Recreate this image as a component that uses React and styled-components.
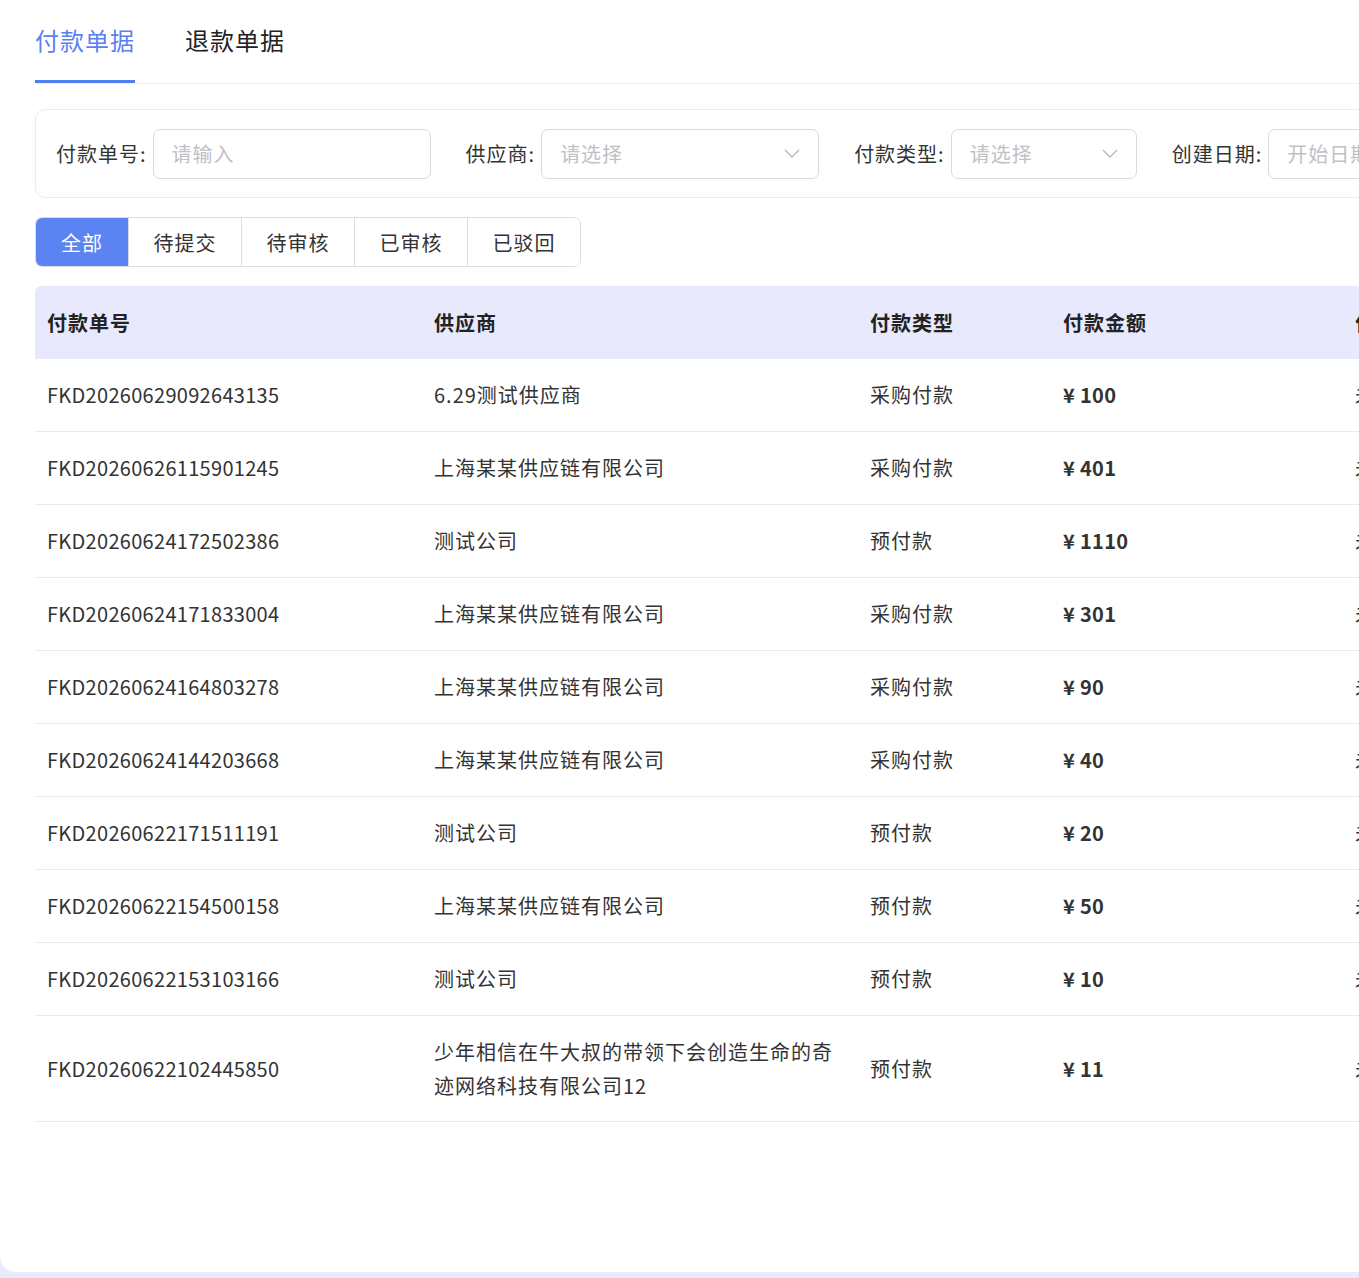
import React from "react";
import styled, { createGlobalStyle } from "styled-components";

const Global = createGlobalStyle`
  html, body { margin: 0; padding: 0; background: #e9ebfb; overflow: hidden; }
  body { font-family: "Noto Sans CJK SC", "Noto Sans", sans-serif; color: #333; }
`;

const Card = styled.div`
  background: #fff;
  width: 1400px;
  height: 1272px;
  border-radius: 0 0 16px 16px;
  padding: 17px 0 0 35px;
  box-sizing: border-box;
  overflow: hidden;
`;
const Tabs = styled.div`
  display: flex;
  gap: 50px;
  border-bottom: 1px solid #eeeef2;
  height: 66px;
`;
const Tab = styled.div`
  font-size: 24px;
  letter-spacing: 1px;
  line-height: 46px;
  color: ${p => (p.$active ? "#5b7ff0" : "#222")};
  border-bottom: 3px solid ${p => (p.$active ? "#4f7ef0" : "transparent")};
  height: 66px;
  box-sizing: border-box;
`;
const Filter = styled.div`
  margin-top: 25px;
  height: 89px;
  border: 1px solid #ececf0;
  border-radius: 10px;
  display: flex;
  align-items: center;
  padding-left: 20px;
  box-sizing: border-box;
  white-space: nowrap;
`;
const Label = styled.span`
  font-size: 20px;
  letter-spacing: 1px;
  color: #333;
  margin-right: 6px;
`;
const Field = styled.div`
  width: ${p => p.$w}px;
  height: 50px;
  border: 1px solid #d9d9de;
  border-radius: 7px;
  box-sizing: border-box;
  display: flex;
  align-items: center;
  justify-content: space-between;
  padding: 0 18px;
  margin-right: 35px;
  font-size: 20px;
  letter-spacing: 1px;
  color: #c0c0c6;
  flex-shrink: 0;
`;
const Seg = styled.div`
  margin-top: 19px;
  display: inline-flex;
  border: 1px solid #dcdce2;
  border-radius: 7px;
  overflow: hidden;
  height: 50px;
  box-sizing: border-box;
`;
const SegItem = styled.div`
  width: ${p => (p.$first ? 92 : 112)}px;
  display: flex;
  align-items: center;
  justify-content: center;
  font-size: 20px;
  letter-spacing: 1px;
  background: ${p => (p.$active ? "#5b84f2" : "#fff")};
  color: ${p => (p.$active ? "#fff" : "#333")};
  border-left: ${p => (p.$first ? "none" : "1px solid #dcdce2")};
`;
const Table = styled.div`
  margin-top: 19px;
`;
const Row = styled.div`
  display: grid;
  grid-template-columns: 387px 436px 193px 292px 200px;
  align-items: center;
  min-height: ${p => (p.$tall ? 106 : 73)}px;
  background: ${p => (p.$head ? "#e8e9fc" : "#fff")};
  border-bottom: ${p => (p.$head ? "none" : "1px solid #ebebef")};
  box-sizing: border-box;
  ${p => p.$head && "height: 71px; border-radius: 6px 6px 0 0;"}
`;
const Cell = styled.div`
  padding: 0 12px;
  font-size: 20px;
  letter-spacing: ${p => (p.$num ? 0.3 : 1)}px;
  font-weight: ${p => (p.$bold ? 700 : 400)};
  color: ${p => (p.$head ? "#222" : "#333")};
  line-height: 34px;
  white-space: ${p => (p.$wrap ? "normal" : "nowrap")};
  ${p => p.$wrap && "max-width: 400px;"}
`;

const Chevron = () => (
  <svg width="16" height="10" viewBox="0 0 16 10" fill="none" stroke="#b8b8bf" strokeWidth="1.4">
    <path d="M1 1l7 7 7-7" />
  </svg>
);

const rows = [
  ["FKD20260629092643135", "6.29测试供应商", "采购付款", "¥ 100"],
  ["FKD20260626115901245", "上海某某供应链有限公司", "采购付款", "¥ 401"],
  ["FKD20260624172502386", "测试公司", "预付款", "¥ 1110"],
  ["FKD20260624171833004", "上海某某供应链有限公司", "采购付款", "¥ 301"],
  ["FKD20260624164803278", "上海某某供应链有限公司", "采购付款", "¥ 90"],
  ["FKD20260624144203668", "上海某某供应链有限公司", "采购付款", "¥ 40"],
  ["FKD20260622171511191", "测试公司", "预付款", "¥ 20"],
  ["FKD20260622154500158", "上海某某供应链有限公司", "预付款", "¥ 50"],
  ["FKD20260622153103166", "测试公司", "预付款", "¥ 10"],
  ["FKD20260622102445850", "少年相信在牛大叔的带领下会创造生命的奇迹网络科技有限公司12", "预付款", "¥ 11"],
];

export default function App() {
  return (
    <>
      <Global />
      <Card>
        <Tabs>
          <Tab $active>付款单据</Tab>
          <Tab>退款单据</Tab>
        </Tabs>
        <Filter>
          <Label>付款单号:</Label>
          <Field $w={278}>请输入</Field>
          <Label>供应商:</Label>
          <Field $w={278}>请选择<Chevron /></Field>
          <Label>付款类型:</Label>
          <Field $w={186}>请选择<Chevron /></Field>
          <Label>创建日期:</Label>
          <Field $w={200}>开始日期</Field>
        </Filter>
        <Seg>
          <SegItem $first $active>全部</SegItem>
          <SegItem>待提交</SegItem>
          <SegItem>待审核</SegItem>
          <SegItem>已审核</SegItem>
          <SegItem>已驳回</SegItem>
        </Seg>
        <Table>
          <Row $head>
            <Cell $head $bold>付款单号</Cell>
            <Cell $head $bold>供应商</Cell>
            <Cell $head $bold>付款类型</Cell>
            <Cell $head $bold>付款金额</Cell>
            <Cell $head $bold>付款状态</Cell>
          </Row>
          {rows.map((r, i) => (
            <Row key={i} $tall={i === 9}>
              <Cell $num>{r[0]}</Cell>
              <Cell $wrap>{r[1]}</Cell>
              <Cell>{r[2]}</Cell>
              <Cell $bold $num>{r[3]}</Cell>
              <Cell>未付款</Cell>
            </Row>
          ))}
        </Table>
      </Card>
    </>
  );
}
